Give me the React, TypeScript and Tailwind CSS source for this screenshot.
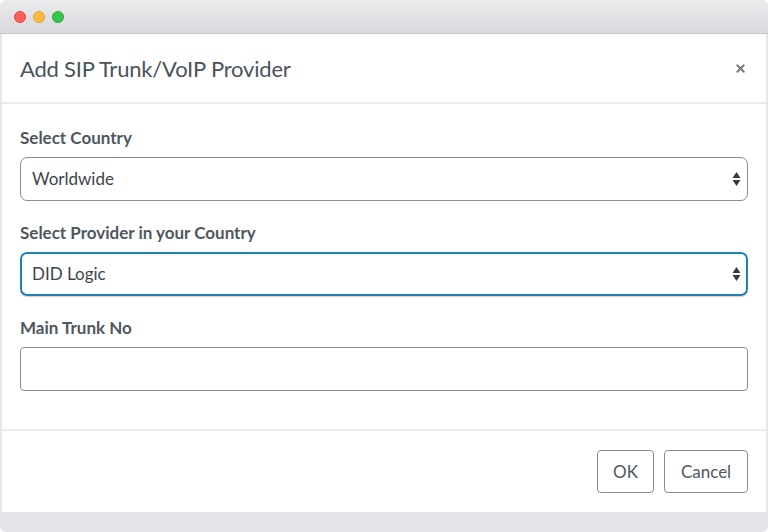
import { X } from 'lucide-react';

function Arrows() {
  return (
    <svg width="9" height="16" viewBox="0 0 9 16" className="shrink-0">
      <path d="M4.5 1 L8.5 7 L0.5 7 Z" fill="#3a3a3a" />
      <path d="M0.5 9 L8.5 9 L4.5 15 Z" fill="#3a3a3a" />
    </svg>
  );
}

export default function App() {
  const font = { fontFamily: 'Lato, "Open Sans", sans-serif' };

  return (
    <div className="w-[768px] h-[532px] flex flex-col bg-white overflow-hidden" style={font}>
      {/* title bar */}
      <div className="h-[34px] shrink-0 rounded-t-[6px] bg-gradient-to-b from-[#ebeaed] to-[#d9d8dc] border-b border-[#c9c8cc] flex items-center gap-[7px] pl-[14px]">
        <span className="w-[12px] h-[12px] rounded-full bg-[#fc605c] border border-[#e0443e]" />
        <span className="w-[12px] h-[12px] rounded-full bg-[#fdbc40] border border-[#dea123]" />
        <span className="w-[12px] h-[12px] rounded-full bg-[#34c84a] border border-[#27aa35]" />
      </div>

      {/* dialog */}
      <div className="flex-1 flex flex-col border-x-2 border-[#e6e6e6] text-[#4f575e]">
        <div className="h-[70px] flex items-center justify-between pl-[18px] pr-[19px] border-b-2 border-[#ececec]">
          <h1 className="text-[22px] text-[#4a535b] tracking-[-0.2px]">Add SIP Trunk/VoIP Provider</h1>
          <X className="w-[13px] h-[13px] text-[#7a7a7a]" strokeWidth={3.5} />
        </div>

        <div className="flex flex-col px-[18px] pt-[23px] pb-[38px] border-b-2 border-[#ececec]">
          <label className="text-[17px] font-bold text-[#4f575e] leading-[22px]">Select Country</label>
          <div className="mt-[8px] h-[44px] rounded-[7px] border border-[#8c8c8c] flex items-center justify-between pl-[11px] pr-[6px] text-[17px] text-[#3f454a]">
            <span>Worldwide</span>
            <Arrows />
          </div>

          <label className="mt-[21px] text-[17px] font-bold text-[#4f575e] leading-[22px]">Select Provider in your Country</label>
          <div className="mt-[8px] h-[44px] rounded-[7px] border-2 border-[#1d82b8] shadow-[0_1px_0_#f3c9bd] flex items-center justify-between pl-[10px] pr-[5px] text-[17px] text-[#3f454a]">
            <span>DID Logic</span>
            <Arrows />
          </div>

          <label className="mt-[21px] text-[17px] font-bold text-[#4f575e] leading-[22px]">Main Trunk No</label>
          <div className="mt-[8px] h-[44px] rounded-[4px] border border-[#8c8c8c]" />
        </div>

        <div className="flex-1 flex items-start justify-end gap-[10px] pr-[18px] pt-[19px]">
          <button className="w-[57px] h-[43px] rounded-[4px] border border-[#8c8c8c] bg-white text-[17px] text-[#4f575e]">OK</button>
          <button className="w-[84px] h-[43px] rounded-[4px] border border-[#8c8c8c] bg-white text-[17px] text-[#4f575e]">Cancel</button>
        </div>
      </div>

      <div className="h-[20px] shrink-0 bg-[#e5e4e8] rounded-b-[6px]" />
    </div>
  );
}
